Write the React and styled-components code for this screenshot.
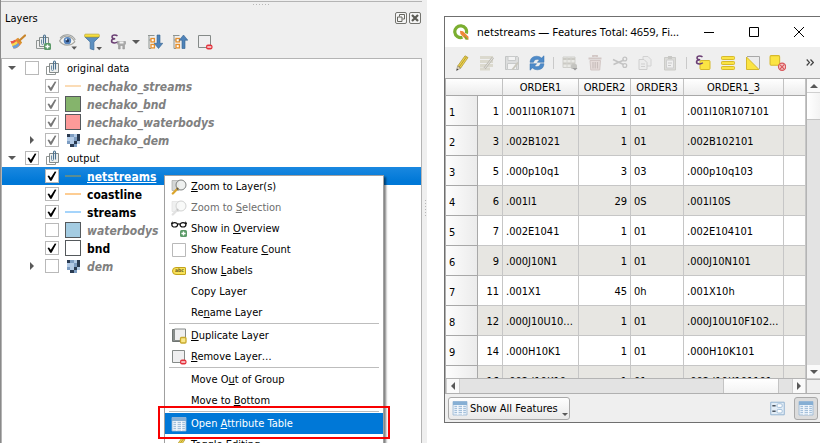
import React from "react";
import styled, { createGlobalStyle, css } from "styled-components";

const Global = createGlobalStyle`
  * { box-sizing: border-box; }
  body { margin: 0; background: #fff; color: #000; font: 11px/16px "DejaVu Sans Condensed", "DejaVu Sans", sans-serif; }
  button, input { font: inherit; color: inherit; margin: 0; padding: 0; }
  svg { display: block; flex: none; }
`;

const Desktop = styled.div`
  position: relative;
  display: grid;
  grid-template-columns: minmax(0, 427fr) minmax(0, 393fr);
  height: 100vh;
  overflow: hidden;
`;

/* ---------- Layers panel ---------- */

const Panel = styled.section`
  display: flex;
  flex-direction: column;
  background: #efefef;
  border-left: 1px solid #8a8a8a;
  min-height: 0;
`;
const DockGrip = styled.div`
  display: flex;
  justify-content: center;
  height: 6px;
  margin: 1px 5px 0 0;
  padding: 2px 0 0 100px;
  border-top: 1px solid #b4b4b4;
`;
const Dots = styled.div`
  width: ${(p) => (p.$vertical ? "4px" : "17px")};
  height: ${(p) => (p.$vertical ? "18px" : "1px")};
  background: ${(p) =>
    p.$vertical
      ? "repeating-linear-gradient(180deg, #b8b8b8 0 1px, transparent 1px 3px) 2px 0 / 1px 18px no-repeat"
      : "repeating-linear-gradient(90deg, #b8b8b8 0 1px, transparent 1px 3px)"};
`;
const PanelHeader = styled.header`
  display: flex;
  align-items: center;
  gap: 2px;
  height: 22px;
  padding: 0 6px 0 4px;
`;
const PanelTitle = styled.h2`
  flex: 1;
  margin: 0;
  padding-top: 2px;
  font-size: 11px;
  font-weight: 400;
`;
const DockButton = styled.button`
  display: grid;
  place-items: center;
  width: 12px;
  height: 12px;
  border: 1px solid #74746f;
  border-radius: 2px;
  background: #f5f5f5;
`;
const Toolbar = styled.div`
  display: flex;
  align-items: center;
  flex: none;
  height: ${(p) => p.$height};
  padding: 0 4px ${(p) => p.$below || "0"};
  background: #efefef;
`;
const ToolButton = styled.button`
  display: grid;
  place-items: center;
  width: ${(p) => (p.$narrow ? "12px" : "25px")};
  height: 24px;
  flex: none;
  border: 0;
  background: none;
`;
const ToolDivider = styled.div`
  width: 1px;
  height: 12px;
  margin: 0 3px 0 4px;
  flex: none;
  background: #c9c9c9;
`;
const ToolSpacer = styled.div`
  flex: 1;
`;
const PanelBody = styled.div`
  display: flex;
  flex: 1;
  min-height: 0;
`;
const Tree = styled.div`
  flex: 1;
  min-width: 0;
  background: #fff;
  border: 1px solid #b4b4b4;
  border-bottom: 0;
`;
const Splitter = styled.div`
  width: 5px;
  padding: 142px 0 0 1px;
`;
const TreeRow = styled.div`
  display: flex;
  align-items: center;
  gap: 6px;
  height: 18px;
  padding-left: ${(p) => (p.$level ? "23px" : "3px")};
  ${(p) => p.$selected && css`background: linear-gradient(#1a88e0, #0078d7 80%);`}
`;
const Expander = styled.button`
  display: grid;
  place-items: center;
  width: 14px;
  height: 14px;
  border: 0;
  background: none;
  color: #5c5c5c;
`;
const Check = styled.input`
  appearance: none;
  display: grid;
  place-items: center;
  flex: none;
  width: 14px;
  height: 14px;
  border: 1px solid #b9b9b9;
  background: #fff;
  color: ${(p) => (p.$muted ? "#777" : "#000")};
  &:checked::before {
    content: "";
    width: 10px;
    height: 10px;
    background: currentColor;
    clip-path: polygon(5% 50%, 20% 45%, 38% 68%, 78% 4%, 94% 8%, 46% 98%, 32% 98%);
  }
`;
const SymbolSlot = styled.span`
  display: grid;
  place-items: center;
  flex: none;
  width: 16px;
  height: 16px;
`;
const Swatch = styled.span`
  width: 16px;
  height: 16px;
  border: 1px solid #55595c;
  background: ${(p) => p.$color};
`;
const LineSymbol = styled.span`
  width: 16px;
  height: 2px;
  background: ${(p) => p.$color};
`;
const LayerName = styled.label`
  padding-top: 2px;
  white-space: nowrap;
  ${(p) => p.$layer && css`font-size: 12px; font-weight: 700;`}
  ${(p) => p.$hidden && css`color: #808080; font-style: italic;`}
  ${(p) => p.$selected && css`color: #fff; text-decoration: underline;`}
`;

/* ---------- Context menu ---------- */

const Menu = styled.div`
  position: absolute;
  left: 164px;
  top: 175px;
  width: 220px;
  background: #fff;
  border: 1px solid #a0a0a0;
  box-shadow: 2px 2px 2px rgba(0, 0, 0, 0.5);
`;
const MenuItem = styled.button`
  position: ${(p) => (p.$active ? "relative" : "static")};
  display: flex;
  align-items: center;
  gap: 4px;
  width: 100%;
  height: 21px;
  padding: 0 6px;
  border: 0;
  background: ${(p) => (p.$active ? "#0078d7" : "#fff")};
  color: ${(p) => (p.$active ? "#fff" : p.disabled ? "#6d6d6d" : "#000")};
  text-align: left;
  white-space: nowrap;
`;
const MenuLine = styled.hr`
  height: 1px;
  margin: 0 4px 1px;
  border: 0;
  background: #bdbdbd;
`;
const Callout = styled.span`
  position: absolute;
  inset: -7px -7px -5px;
  border: 2px solid #f80000;
`;

/* ---------- Attribute table window ---------- */

const WindowArea = styled.div`
  display: flex;
  min-height: 0;
  padding: 16px 0 20px 17px;
  background: #fff;
`;
const Window = styled.section`
  display: flex;
  flex-direction: column;
  flex: 1;
  min-width: 0;
  border: 1px solid #6f6f6f;
  border-right: 0;
  background: #efefef;
`;
const TitleBar = styled.header`
  display: flex;
  align-items: center;
  flex: none;
  height: 30px;
  padding: 0 2px 0 8px;
  gap: 8px;
  background: #fff;
`;
const WindowTitle = styled.h1`
  flex: 1;
  margin: 0;
  font: 11px/16px "Noto Sans", "Open Sans", sans-serif;
  white-space: nowrap;
`;
const Captions = styled.div`
  display: flex;
`;
const CaptionButton = styled.button`
  display: grid;
  place-items: center;
  width: 45px;
  height: 29px;
  border: 0;
  background: none;
`;
const TableArea = styled.div`
  display: grid;
  grid-template: minmax(0, 1fr) 14px / minmax(0, 1fr) 14px;
  flex: 1;
  min-height: 0;
  border-top: 1px solid #a5a5a5;
  border-bottom: 1px solid #b0b0b0;
  border-left: 1px solid #b0b0b0;
`;
const Viewport = styled.div`
  overflow: hidden;
  border-bottom: 1px solid #b4b4b4;
  background: #fff;
`;
const Table = styled.table`
  width: 100%;
  table-layout: fixed;
  border-collapse: separate;
  border-spacing: 0;
`;
const Col = styled.col`
  width: ${(p) => p.$width};
`;
const HeadCell = styled.th`
  height: 17px;
  padding: 2px 0 0;
  border-right: 1px solid #c2c2c2;
  border-bottom: 1px solid #a8a8a8;
  background: linear-gradient(#fff, #ececec);
  font-weight: 400;
  line-height: 14px;
`;
const RowHead = styled.th`
  height: 30px;
  padding: 4px 3px 0 3px;
  border-right: 1px solid #a8a8a8;
  border-bottom: 1px solid #a8a8a8;
  background: linear-gradient(90deg, #fdfdfd, #ebebeb);
  font-weight: 400;
  text-align: left;
`;
const Row = styled.tr`
  background: ${(p) => (p.$shaded ? "#e7e6e2" : "#fff")};
`;
const Cell = styled.td`
  height: 30px;
  padding: 2px 3px 0;
  overflow: hidden;
  border-right: 1px solid #c6c6c6;
  border-bottom: 1px solid #c6c6c6;
  text-align: ${(p) => (p.$number ? "right" : "left")};
  white-space: nowrap;
`;
const ScrollTrack = styled.div`
  display: flex;
  flex-direction: ${(p) => (p.$vertical ? "column" : "row")};
  border-left: ${(p) => (p.$vertical ? "1px solid #b4b4b4" : "0")};
  background: #e3e3e3;
`;
const ScrollButton = styled.button`
  display: grid;
  place-items: center;
  flex: none;
  width: 14px;
  height: 14px;
  border: 1px solid #cfcfcf;
  border-width: ${(p) => (p.$vertical ? "0 0 1px" : "0 1px")};
  background: #fafafa;
  color: #5c5c5c;
`;
const ScrollThumb = styled.div`
  flex: ${(p) => p.$share};
  background: linear-gradient(${(p) => (p.$vertical ? "90deg" : "180deg")}, #fff, #f3f3f3);
  border: 1px solid #c4c4c4;
  border-width: ${(p) => (p.$vertical ? "0 0 1px" : "0 1px")};
`;
const ScrollGap = styled.div`
  flex: ${(p) => p.$share};
`;
const Corner = styled.div`
  border-left: 1px solid #b4b4b4;
  border-top: 1px solid #b4b4b4;
`;
const StatusBar = styled.footer`
  display: flex;
  align-items: center;
  flex: none;
  gap: 5px;
  height: 28px;
  padding: 0 2px 0 3px;
`;
const FilterButton = styled.button`
  display: flex;
  align-items: center;
  gap: 2px;
  height: 23px;
  padding: 0 1px 0 3px;
  border: 1px solid #a9a9a9;
  border-radius: 3px;
  background: linear-gradient(#fefefe, #e9e9e9);
  white-space: nowrap;
`;
const FilterLabel = styled.span`
  padding-top: 2px;
`;
const FilterArrow = styled.span`
  align-self: flex-end;
  margin: 0 0 3px 2px;
`;
const ViewButton = styled.button`
  display: grid;
  place-items: center;
  width: 24px;
  height: 23px;
  border: 1px solid ${(p) => (p.$pressed ? "#a9a9a9" : "transparent")};
  border-radius: 3px;
  background: ${(p) => (p.$pressed ? "#dcdcdc" : "none")};
`;

/* ---------- Icons ---------- */

const Icon = ({ size = 16, children, ...rest }) => (
  <svg width={size} height={size} viewBox="0 0 16 16" fill="none" aria-hidden="true" {...rest}>
    {children}
  </svg>
);
const Triangle = ({ dir, w = 8, h = 4 }) => {
  const d = {
    down: `M0 0H${w}L${w / 2} ${h}Z`,
    up: `M0 ${h}H${w}L${w / 2} 0Z`,
    right: `M0 0V${w}L${h} ${w / 2}Z`,
    left: `M${h} 0V${w}L0 ${w / 2}Z`,
  }[dir];
  const side = dir === "left" || dir === "right";
  return (
    <svg width={side ? h : w} height={side ? w : h} aria-hidden="true">
      <path d={d} fill="#595959" />
    </svg>
  );
};
const PlusBadge = () => (
  <g>
    <rect x="9" y="9" width="7" height="7" rx="1.5" fill="#5b9a68" />
    <path d="M12.5 10.4v4.2M10.4 12.5h4.2" stroke="#fff" strokeWidth="1.4" />
  </g>
);
const MinusBadge = () => (
  <g>
    <rect x="9" y="10.5" width="6.5" height="5" rx="2" fill="#e3323c" />
    <path d="M10.3 13h4" stroke="#fff" strokeWidth="1.3" />
  </g>
);
const BrushIcon = () => (
  <Icon>
    <path d="M0.5 7C3 8 5 5.500 7 4.800L11 10C9 13 6 15 3.500 14.500Z" fill="#ee7d38" />
    <path d="M0.500 7c2 .8 3-.3 4.200-1.200l1 2C4 9.500 2.600 9.800 1.400 9.500z" fill="#e9544d" />
    <path d="M1.400 9.500c2 .2 3.500-1 5-2.300l1.500 2C6 11 4 12 2.300 12z" fill="#f8d94f" />
    <path d="M2.300 12c2 0 4-1.400 5.800-3l1.600 2C8 13 6 14.700 3.500 14.500z" fill="#6a9fd8" />
    <path d="M6.500 4.800l1.700-1 3.900 4.700-1.300 1.700z" fill="#d8912b" />
    <path d="M9.500 6.500L15 1.500" stroke="#c9862d" strokeWidth="2.200" strokeLinecap="round" />
  </Icon>
);
const GroupIcon = ({ plus }) => (
  <Icon>
    <path d="M4.500 6.500H1.500v8h9V13" stroke="#909594" />
    <path d="M4.500 3.500h9v9h-9z" stroke="#858b8a" fill="#eef0ef" />
    <path d="M6.500 5.500v4q0 1 1 1t1-1" stroke="#6d8ea8" />
    <path d="M10.500 9.500V2.500q0-1.500-1-1.500t-1 1.500v7" stroke="#4c7290" strokeWidth="1.100" />
    {plus && <PlusBadge />}
  </Icon>
);
const EyeIcon = () => (
  <Icon size={18}>
    <path d="M0.500 7Q3.500 2.500 7.500 2.800t6.500 5Q11 11 7 10.800T0.500 7z" fill="#f4f4f2" stroke="#a8a8a2" />
    <path d="M1 4.500Q4 1.200 8 1.600t6.500 4.500" stroke="#9da09f" />
    <circle cx="7.500" cy="6.800" r="3.300" fill="#5583bd" />
    <circle cx="7.500" cy="6.800" r="1.500" fill="#243a5e" />
    <circle cx="6.500" cy="5.700" r=".8" fill="#dce9f7" />
    <path d="M11 12h5l-2.500 2.800z" fill="#595959" />
  </Icon>
);
const FilterIcon = () => (
  <Icon size={18}>
    <path d="M0.800 3.500L5.500 8v6l3.300 1V8l4.700-4.500z" fill="#5b8fc0" stroke="#41719f" strokeWidth=".7" />
    <rect x="0.500" y="1" width="13.200" height="2.600" rx="1" fill="#f5df3c" stroke="#b9a12c" strokeWidth=".6" />
    <path d="M11 12.500h5l-2.500 2.800z" fill="#595959" />
  </Icon>
);
const EpsilonPath = (props) => (
  <path d="M7.500 1.900Q6.300 1 4.600 1 2 1 2 2.900 2 4.600 5.200 4.700 1.500 4.800 1.500 7.100 1.500 9 4.500 9 6.400 9 7.800 7.800" stroke="#6b3f74" strokeWidth="1.500" {...props} />
);
const EpsilonFilterIcon = () => (
  <Icon>
    <EpsilonPath />
    <path d="M7.500 7.500h8v2.500l-1 1v4h-1.700v-3.500h-2.600V15H8.500v-4l-1-1z" fill="#a9a9a9" stroke="#8d8d8d" strokeWidth=".5" />
    <path d="M9.500 7.500h4v2h-4z" fill="#f2f2f2" />
  </Icon>
);
const ExpandIcon = ({ up }) => (
  <Icon>
    <path d="M1 1.500h6.500M2 2v12.500h2M2 6h2" stroke="#8d9491" />
    <rect x="4" y="4.500" width="3.400" height="3.400" fill="#fff" stroke="#e68f2c" strokeWidth="1.300" />
    <rect x="4" y="10.500" width="3.400" height="3.400" fill="#fff" stroke="#e68f2c" strokeWidth="1.300" />
    <path
      d={up ? "M11.500 1L15.800 6.200H13V14.500h-3V6.200H7.200z" : "M10 1h3v8.300h2.800L11.500 14.500 7.200 9.300H10z"}
      fill="#4f83b9"
      stroke="#33618f"
      strokeWidth=".6"
    />
  </Icon>
);
const RemoveIcon = () => (
  <Icon>
    <path d="M1.500 1.500h12v12h-12z" stroke="#858a88" fill="#efeff0" />
    <MinusBadge />
  </Icon>
);
const RasterIcon = () => {
  const D = "#2a3b52";
  const M = "#7d9dc2";
  const L = "#b2cae6";
  const tones = [D, M, L, D, L, L, M, D, M, L, D, L, "#fff", D, M, "#fff"];
  return (
    <svg width="13" height="13" viewBox="0 0 4 4" shapeRendering="crispEdges" aria-hidden="true">
      {tones.map((t, i) => (
        <rect key={i} x={i % 4} y={Math.floor(i / 4)} width="1" height="1" fill={t} />
      ))}
    </svg>
  );
};
const ZoomIcon = ({ faded }) => (
  <Icon opacity={faded ? 0.35 : 1}>
    <path d="M1 1.500h7v10H1z" fill="#d4d6d5" stroke="#a6a9a8" strokeWidth=".7" />
    <circle cx="10" cy="6" r="5" fill="#eceeed" fillOpacity=".85" stroke="#7d807f" />
    <path d="M6.500 9.800L1.800 14.500" stroke={faded ? "#aaa" : "#dba52c"} strokeWidth="2.300" strokeLinecap="round" />
    <path d="M7 9.200l-1 1.200" stroke="#555" strokeWidth="1.800" />
  </Icon>
);
const OverviewIcon = () => (
  <Icon>
    <path d="M0.500 3.200Q.3 1 2 1M15.500 3.200Q15.700 1 14 1" stroke="#111" />
    <ellipse cx="3.700" cy="3.800" rx="2.900" ry="2.200" stroke="#111" strokeWidth="1.200" />
    <ellipse cx="12" cy="3.800" rx="2.900" ry="2.200" stroke="#111" strokeWidth="1.200" />
    <path d="M6.500 3.300q1.300-1 2.700 0" stroke="#111" strokeWidth="1.200" />
    <PlusBadge />
  </Icon>
);
const BoxIcon = () => (
  <Icon>
    <path d="M1.500 1.500h13v13h-13z" fill="#fff" stroke="#b9b9b9" />
  </Icon>
);
const LabelTag = styled.span`
  width: 14px;
  height: 8px;
  padding-left: 1px;
  border: 1px solid #c3a31b;
  border-radius: 4px 1px 1px 4px;
  background: #f8e25a;
  color: #6a5f20;
  font: bold 5px/5px "DejaVu Sans Condensed", sans-serif;
  text-align: center;
`;
const DuplicateIcon = () => (
  <Icon>
    <path d="M3 1.500H1.500v12H12" stroke="#6f7472" fill="#8a8f8d" />
    <path d="M3.500 1h11v11.500h-11z" fill="#efeff0" stroke="#858a88" />
    <rect x="9.500" y="9.500" width="5.500" height="5.500" rx="1" fill="#f9e88a" stroke="#c8a92e" strokeWidth="1.300" />
  </Icon>
);
const TableIcon = () => (
  <Icon>
    <path d="M1 1.500h14v13.500H1z" fill="#e4edf6" stroke="#9ab8d4" strokeWidth=".8" />
    <path d="M1 1.500h14v3.500H1z" fill="#86afd4" />
    <path d="M2.500 6.500h2.700M2.500 8.500h2.700M2.500 10.500h2.700M2.500 12.500h2.700M6.500 6.500h3.500M6.500 8.500h3.500M6.500 10.500h3.500M6.500 12.500h3.500M11.200 6.500h2.700M11.200 8.500h2.700M11.200 10.500h2.700M11.200 12.500h2.700" stroke="#a3bfda" />
    <path d="M5.800 5v10M10.600 5v10" stroke="#f5f9fd" />
  </Icon>
);
const FormIcon = () => (
  <Icon size={15}>
    <path d="M.8 1.300h14.400v13.400H.8z" fill="#e3edf6" stroke="#8fb0cf" />
    <path d="M2.500 5h3.500M2.500 11h3.500" stroke="#4b5560" strokeWidth="1.500" />
    <rect x="7.500" y="3" width="5.500" height="3.800" rx="1.300" fill="#fff" stroke="#9dbbd8" />
    <rect x="7.500" y="9" width="5.500" height="3.800" rx="1.300" fill="#fff" stroke="#9dbbd8" />
  </Icon>
);
const PencilIcon = () => (
  <Icon>
    <path d="M3.600 11.200L11 .8l3 1.800L6.600 13.200z" fill="#f0d54d" stroke="#a48d2b" strokeWidth=".7" />
    <path d="M5.200 12L12.500 1.800" stroke="#b29a35" />
    <path d="M3.600 11.200l3 2L2.500 15.600z" fill="#e9d9b4" stroke="#777" strokeWidth=".5" />
    <path d="M2.500 15.600l.4-2.200 1.500 1z" fill="#333" />
  </Icon>
);
const MultiEditIcon = () => (
  <Icon>
    <path d="M1 2.500h13M1 6.500h13M1 10.500h13M1 14h10" stroke="#dbd9ce" strokeWidth="2.800" />
    <path d="M5.500 13.500L14 2.500" stroke="#bdbbb3" strokeWidth="2.600" />
    <path d="M5.500 13.500L14 2.500" stroke="#e6e4de" strokeWidth="1" />
  </Icon>
);
const SaveIcon = () => (
  <Icon>
    <path d="M1.500 1.500h12l1 1v12h-13z" fill="#dcdddd" stroke="#c3c5c5" />
    <path d="M4 1.500h7.500v4H4zM3.500 8.500h9v6h-9z" fill="#f3f3f3" stroke="#c8caca" />
    <path d="M8.500 14.500l5.500-7" stroke="#c9c7bd" strokeWidth="2" />
  </Icon>
);
const RefreshIcon = () => (
  <Icon>
    <path d="M1 7.300Q1.300 1.500 7.500 1.200 10.500 1.100 12.600 3L15 .8V7.300H8.300L10.400 5.100Q8.800 4 6.800 4.500 4.800 5 4.500 7.300z" fill="#4f8bc9" stroke="#3571ad" strokeWidth=".5" />
    <path d="M15 8.700Q14.700 14.500 8.500 14.800 5.500 14.900 3.400 13L1 15.200V8.700H7.700L5.600 10.900Q7.200 12 9.200 11.500 11.200 11 11.500 8.700z" fill="#4f8bc9" stroke="#3571ad" strokeWidth=".5" />
  </Icon>
);
const AddRowIcon = () => (
  <Icon>
    <path d="M1 2h12v10.500H1z" fill="#e9e9e5" stroke="#cfcfcb" />
    <path d="M1 4h12M1 8.500h12" stroke="#cbcac4" strokeWidth="2" />
    <path d="M5 2v10.500M9 2v10.500" stroke="#d4d4d0" />
    <rect x="9" y="9" width="6" height="5" rx="1.500" fill="#c4c4c0" />
    <path d="M10.500 13h5l-2.500 2.600z" fill="#9d9d9d" />
  </Icon>
);
const TrashIcon = () => (
  <Icon>
    <path d="M6 2V.8h4V2M1.500 3.500h13" stroke="#d2c7c5" strokeWidth="1.800" />
    <path d="M3 5.500h10.500l-.8 9.500H3.800z" fill="#e6dcda" stroke="#d2c7c5" />
    <path d="M6 7v6.500M8.200 7v6.500M10.500 7v6.500" stroke="#c9bebc" strokeWidth="1.200" />
  </Icon>
);
const CutIcon = () => (
  <Icon>
    <path d="M1 4.500L11.500 9.500M1.500 9.500L12 5" stroke="#c3c3c3" strokeWidth="1.600" />
    <circle cx="12.800" cy="4" r="1.900" stroke="#c3c3c3" strokeWidth="1.300" />
    <circle cx="12.800" cy="10.500" r="1.900" stroke="#c3c3c3" strokeWidth="1.300" />
  </Icon>
);
const CopyIcon = () => (
  <Icon>
    <path d="M6 1.500h5l3 3V11H6z" fill="#ececec" stroke="#d2d2d2" />
    <path d="M2 4.500h5l3 3V14.500H2z" fill="#ececec" stroke="#cecece" />
    <path d="M4 9h4M4 11.500h4" stroke="#cfcfcf" />
  </Icon>
);
const PasteIcon = () => (
  <Icon>
    <path d="M2.500 2.500h11v12.500h-11z" fill="#dbdbd8" stroke="#cbcbc8" />
    <path d="M4.500 5h7v8h-7z" fill="#efefef" stroke="#cfcfcf" />
    <path d="M6 1h4v3H6z" fill="#c8c8c5" />
    <path d="M6 8h4M6 10.500h3" stroke="#c9c9c9" />
  </Icon>
);
const SelectExprIcon = () => (
  <Icon>
    <rect x="5" y="5.500" width="10" height="9" rx="1" fill="#fbe443" stroke="#d6b92c" />
    <EpsilonPath />
  </Icon>
);
const SelectAllIcon = () => (
  <Icon>
    {[1.5, 6.5, 11.5].map((y) => (
      <rect key={y} x="1.500" y={y} width="13" height="3" rx=".8" fill="#fbe443" stroke="#d6b92c" />
    ))}
  </Icon>
);
const InvertIcon = () => (
  <Icon>
    <path d="M2 1.500h12.500V14" fill="#ececec" stroke="#a8a8a8" />
    <path d="M1.500 2v12.500H14z" fill="#fbe443" stroke="#d6b92c" />
  </Icon>
);
const DeselectIcon = () => (
  <Icon size={17}>
    <rect x="1" y="1.500" width="9" height="9" rx="1" fill="#fbe443" stroke="#d6b92c" />
    <circle cx="12.300" cy="12" r="3.400" fill="#f5c3c3" stroke="#d8575b" strokeWidth="1.100" />
    <path d="M10.300 14.200l4.200-4.400M10.500 10.200l3.600 3.900" stroke="#d8575b" />
  </Icon>
);
const QgisIcon = () => (
  <Icon>
    <path d="M9.500 13.300A5.900 5.900 0 1 1 13.300 9.500" stroke="#7bae30" strokeWidth="3.200" />
    <path d="M7 6.800l3 .4 5.500 5.600v2.700h-2.700L7.400 10z" fill="#f0873a" />
    <path d="M11 11l4.500 4.500h-3z" fill="#7bae30" />
  </Icon>
);

/* ---------- Data ---------- */

const layers = [
  { name: "original data", level: 0, open: true, checked: false, icon: "group" },
  { name: "nechako_streams", level: 1, checked: true, muted: true, hidden: true, line: "#fbdcb6" },
  { name: "nechako_bnd", level: 1, checked: true, muted: true, hidden: true, fill: "#85b46c" },
  { name: "nechako_waterbodys", level: 1, checked: true, muted: true, hidden: true, fill: "#fd9a99" },
  { name: "nechako_dem", level: 1, closed: true, checked: true, muted: true, hidden: true, icon: "raster" },
  { name: "output", level: 0, open: true, checked: true, icon: "group" },
  { name: "netstreams", level: 1, checked: true, selected: true, line: "#5b8d92" },
  { name: "coastline", level: 1, checked: true, line: "#fdcd93" },
  { name: "streams", level: 1, checked: true, line: "#a5d4fb" },
  { name: "waterbodys", level: 1, checked: false, hidden: true, fill: "#a4cce2" },
  { name: "bnd", level: 1, checked: true, fill: "#ffffff" },
  { name: "dem", level: 1, closed: true, checked: false, hidden: true, icon: "raster" },
];

const menu = [
  { text: "&Zoom to Layer(s)", icon: <ZoomIcon /> },
  { text: "Zoom to &Selection", icon: <ZoomIcon faded />, disabled: true },
  { text: "Show in &Overview", icon: <OverviewIcon /> },
  { text: "Show Feature &Count", icon: <BoxIcon /> },
  { text: "Show &Labels", icon: <LabelTag>abc</LabelTag> },
  { text: "Copy Layer" },
  { text: "Re&name Layer" },
  null,
  { text: "&Duplicate Layer", icon: <DuplicateIcon /> },
  { text: "&Remove Layer…", icon: <RemoveIcon /> },
  null,
  { text: "Move O&ut of Group" },
  { text: "Move to &Bottom" },
  null,
  { text: "Open &Attribute Table", icon: <TableIcon />, active: true },
  { text: "Toggle Editing", icon: <PencilIcon /> },
];

const features = [
  [1, ".001l10R1071", 1, "01", ".001l10R107101"],
  [3, ".002B1021", 1, "01", ".002B102101"],
  [5, ".000p10q1", 3, "03", ".000p10q103"],
  [6, ".001l1", 29, "0S", ".001l10S"],
  [7, ".002E1041", 1, "01", ".002E104101"],
  [9, ".000J10N1", 1, "01", ".000J10N101"],
  [11, ".001X1", 45, "0h", ".001X10h"],
  [12, ".000J10U10...", 1, "01", ".000J10U10F102..."],
  [14, ".000H10K1", 1, "01", ".000H10K101"],
  [16, ".002d10K10", 1, "01", ".002d10K101101"],
];

const Mnemonic = ({ text }) => {
  const at = text.indexOf("&");
  if (at < 0) return <span>{text}</span>;
  return (
    <span>
      {text.slice(0, at)}
      <u>{text[at + 1]}</u>
      {text.slice(at + 2)}
    </span>
  );
};

const LayerSymbol = ({ layer }) => (
  <SymbolSlot>
    {layer.icon === "group" && <GroupIcon />}
    {layer.icon === "raster" && <RasterIcon />}
    {layer.line && <LineSymbol $color={layer.line} />}
    {layer.fill && <Swatch $color={layer.fill} />}
  </SymbolSlot>
);

const LayersPanel = () => (
  <Panel>
    <DockGrip><Dots /></DockGrip>
    <PanelHeader>
      <PanelTitle>Layers</PanelTitle>
      <DockButton aria-label="Float panel">
        <Icon size={8}>
          <path d="M5 5V1h10v9h-4" stroke="#66665f" strokeWidth="2" />
          <path d="M1 6h9v9H1z" stroke="#66665f" strokeWidth="2" />
        </Icon>
      </DockButton>
      <DockButton aria-label="Close panel">
        <Icon size={8}>
          <path d="M2 2l12 12M14 2L2 14" stroke="#5c5c56" strokeWidth="4.500" />
        </Icon>
      </DockButton>
    </PanelHeader>
    <Toolbar $height="29px" $below="3px">
      <ToolButton aria-label="Layer styling"><BrushIcon /></ToolButton>
      <ToolButton aria-label="Add group"><GroupIcon plus /></ToolButton>
      <ToolButton aria-label="Map themes"><EyeIcon /></ToolButton>
      <ToolButton aria-label="Filter legend"><FilterIcon /></ToolButton>
      <ToolButton aria-label="Filter by expression"><EpsilonFilterIcon /></ToolButton>
      <ToolButton $narrow aria-label="Expression options"><Triangle dir="down" /></ToolButton>
      <ToolButton aria-label="Expand all"><ExpandIcon /></ToolButton>
      <ToolButton aria-label="Collapse all"><ExpandIcon up /></ToolButton>
      <ToolButton aria-label="Remove layer"><RemoveIcon /></ToolButton>
    </Toolbar>
    <PanelBody>
      <Tree>
        {layers.map((l) => (
          <TreeRow key={l.name} $level={l.level} $selected={l.selected}>
            {l.open || l.closed ? (
              <Expander aria-label={`Toggle ${l.name}`}>
                <Triangle dir={l.open ? "down" : "right"} />
              </Expander>
            ) : (
              <Expander as="span" />
            )}
            <Check type="checkbox" id={l.name} defaultChecked={l.checked} $muted={l.muted} />
            <LayerSymbol layer={l} />
            <LayerName htmlFor={l.name} $layer={l.level === 1} $hidden={l.hidden} $selected={l.selected}>
              {l.name}
            </LayerName>
          </TreeRow>
        ))}
      </Tree>
      <Splitter><Dots $vertical /></Splitter>
    </PanelBody>
  </Panel>
);

const ContextMenu = () => (
  <Menu role="menu">
    {menu.map((m, i) =>
      m ? (
        <MenuItem key={m.text} role="menuitem" disabled={m.disabled} $active={m.active}>
          <SymbolSlot>{m.icon}</SymbolSlot>
          <Mnemonic text={m.text} />
          {m.active && <Callout />}
        </MenuItem>
      ) : (
        <MenuLine key={i} />
      )
    )}
  </Menu>
);

const AttributeWindow = () => (
  <Window>
    <TitleBar>
      <QgisIcon />
      <WindowTitle>netstreams — Features Total: 4659, Fi...</WindowTitle>
      <Captions>
        <CaptionButton aria-label="Minimize">
          <svg width="10" height="10"><path d="M0 5.500h10" stroke="#000" /></svg>
        </CaptionButton>
        <CaptionButton aria-label="Maximize">
          <svg width="10" height="10"><path d="M.5.5h9v9h-9z" fill="none" stroke="#000" /></svg>
        </CaptionButton>
        <CaptionButton aria-label="Close">
          <svg width="10" height="10"><path d="M0 0l10 10M10 0L0 10" stroke="#000" /></svg>
        </CaptionButton>
      </Captions>
    </TitleBar>
    <Toolbar $height="31px">
      <ToolButton aria-label="Toggle editing"><PencilIcon /></ToolButton>
      <ToolButton aria-label="Multi edit" disabled><MultiEditIcon /></ToolButton>
      <ToolButton aria-label="Save edits" disabled><SaveIcon /></ToolButton>
      <ToolButton aria-label="Reload"><RefreshIcon /></ToolButton>
      <ToolDivider />
      <ToolButton aria-label="Add feature" disabled><AddRowIcon /></ToolButton>
      <ToolButton aria-label="Delete" disabled><TrashIcon /></ToolButton>
      <ToolButton aria-label="Cut" disabled><CutIcon /></ToolButton>
      <ToolButton aria-label="Copy" disabled><CopyIcon /></ToolButton>
      <ToolButton aria-label="Paste" disabled><PasteIcon /></ToolButton>
      <ToolDivider />
      <ToolButton aria-label="Select by expression"><SelectExprIcon /></ToolButton>
      <ToolButton aria-label="Select all"><SelectAllIcon /></ToolButton>
      <ToolButton aria-label="Invert selection"><InvertIcon /></ToolButton>
      <ToolButton aria-label="Deselect all"><DeselectIcon /></ToolButton>
      <ToolSpacer />
      <ToolButton $narrow aria-label="More tools">
        <svg width="8" height="7"><path d="M.7.500l2.800 3-2.800 3M4.500.500l2.800 3-2.800 3" fill="none" stroke="#444" strokeWidth="1.200" /></svg>
      </ToolButton>
    </Toolbar>
    <TableArea>
      <Viewport>
        <Table>
          <colgroup>
            <Col $width="32px" />
            <Col $width="25px" />
            <Col $width="76px" />
            <Col $width="52px" />
            <Col $width="53px" />
            <Col $width="100px" />
            <Col $width="auto" />
          </colgroup>
          <thead>
            <tr>
              <HeadCell colSpan={2} />
              <HeadCell>ORDER1</HeadCell>
              <HeadCell>ORDER2</HeadCell>
              <HeadCell>ORDER3</HeadCell>
              <HeadCell>ORDER1_3</HeadCell>
              <HeadCell />
            </tr>
          </thead>
          <tbody>
            {features.map(([id, o1, o2, o3, o13], i) => (
              <Row key={id} $shaded={i % 2 === 1}>
                <RowHead scope="row">{i + 1}</RowHead>
                <Cell $number>{id}</Cell>
                <Cell>{o1}</Cell>
                <Cell $number>{o2}</Cell>
                <Cell>{o3}</Cell>
                <Cell>{o13}</Cell>
                <Cell />
              </Row>
            ))}
          </tbody>
        </Table>
      </Viewport>
      <ScrollTrack $vertical>
        <ScrollButton $vertical aria-label="Scroll up"><Triangle dir="up" /></ScrollButton>
        <ScrollThumb $vertical $share={26} />
        <ScrollGap $share={246} />
        <ScrollButton $vertical aria-label="Scroll down"><Triangle dir="down" /></ScrollButton>
      </ScrollTrack>
      <ScrollTrack>
        <ScrollButton aria-label="Scroll left"><Triangle dir="left" /></ScrollButton>
        <ScrollGap $share={265} />
        <ScrollThumb $share={54} />
        <ScrollGap $share={13} />
        <ScrollButton aria-label="Scroll right"><Triangle dir="right" /></ScrollButton>
      </ScrollTrack>
      <Corner />
    </TableArea>
    <StatusBar>
      <FilterButton>
        <TableIcon />
        <FilterLabel>Show All Features</FilterLabel>
        <FilterArrow><Triangle dir="down" w={6} h={3} /></FilterArrow>
      </FilterButton>
      <ToolSpacer />
      <ViewButton aria-label="Form view"><FormIcon /></ViewButton>
      <ViewButton $pressed aria-label="Table view"><TableIcon /></ViewButton>
    </StatusBar>
  </Window>
);

export default function App() {
  return (
    <Desktop>
      <Global />
      <LayersPanel />
      <WindowArea>
        <AttributeWindow />
      </WindowArea>
      <ContextMenu />
    </Desktop>
  );
}
